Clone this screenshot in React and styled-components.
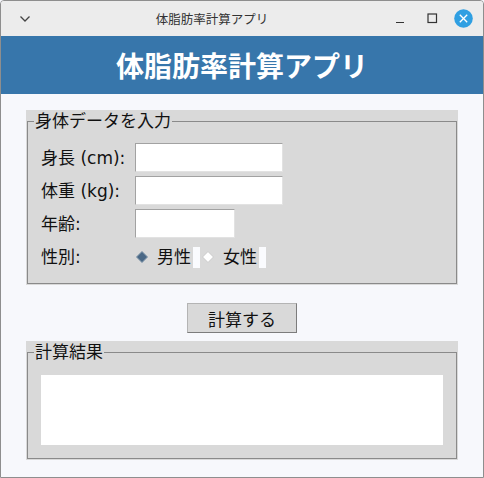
import React from "react";
import styled, { createGlobalStyle } from "styled-components";

const Global = createGlobalStyle`
  html, body { margin: 0; padding: 0; background: #f7f8fc; }
  * { box-sizing: border-box; }
`;

const FONT = `"Noto Sans CJK JP", "Noto Sans", sans-serif`;
const TK_FONT = `"DejaVu Sans", "Noto Sans CJK JP", sans-serif`;

const Window = styled.div`
  width: 484px;
  height: 478px;
  border: 1px solid #8e8e8e;
  border-radius: 4px 4px 0 0;
  background: #f7f8fc;
  display: flex;
  flex-direction: column;
  overflow: hidden;
  font-family: ${FONT};
`;

const TitleBar = styled.div`
  height: 35px;
  flex: none;
  background: #ececec;
  display: flex;
  align-items: center;
`;

const TitleLeft = styled.div`
  width: 43px;
  display: flex;
  justify-content: center;
  padding-left: 4px;
`;

const TitleText = styled.div`
  flex: 1;
  text-align: center;
  font-size: 12.5px;
  color: #333;
`;

const TitleRight = styled.div`
  width: 103px;
  display: flex;
  align-items: center;
  padding-left: 4px;
`;

const WinBtn = styled.div`
  width: ${(p) => p.$w}px;
  height: 20px;
  display: flex;
  align-items: center;
  justify-content: center;
`;

const Header = styled.div`
  height: 58px;
  flex: none;
  background: #3776ab;
  color: #fff;
  display: flex;
  align-items: center;
  justify-content: center;
  font-size: 28px;
  font-weight: 700;
`;

const Body = styled.div`
  padding: 16px 25px 0 25px;
  display: flex;
  flex-direction: column;
  font-family: ${TK_FONT};
`;

const Group = styled.div`
  background: #d9d9d9;
  padding: 0 1px 1px 1px;
`;

const Frame = styled.fieldset`
  margin: 0;
  padding: 0;
  border: 1px solid #8a8a8a;
  min-width: 0;
`;

const Legend = styled.legend`
  margin-left: 6px;
  padding: 0 1px;
  font-size: 17px;
  line-height: 22px;
  height: 22px;
  color: #111;
  background: #d9d9d9;
`;

const FormGrid = styled.div`
  display: grid;
  grid-template-columns: 94px 1fr;
  grid-template-rows: 29px 29px 29px 30px;
  row-gap: 4px;
  padding: 11px 13px 11px 13px;
  align-items: center;
  justify-items: start;
`;

const FieldLabel = styled.div`
  font-size: 17px;
  color: #111;
  line-height: 22px;
`;

const Entry = styled.input`
  width: ${(p) => p.$w}px;
  height: 29px;
  margin: 0;
  padding: 2px 4px;
  background: #fff;
  border-style: solid;
  border-width: 1px;
  border-color: #a2a2a2 #e2e2e2 #e2e2e2 #a2a2a2;
  font-family: ${TK_FONT};
  font-size: 16px;
  outline: none;
`;

const RadioGroup = styled.div`
  display: flex;
  align-items: center;
  padding-left: 1px;
  gap: 2px;
`;

const RadioOption = styled.label`
  display: flex;
  align-items: center;
  font-size: 17px;
  color: #111;
  line-height: 22px;
`;

const RadioText = styled.span`
  margin-left: 9px;
  margin-right: 2px;
`;

const Strip = styled.span`
  width: 7px;
  height: 21px;
  background: #fafbfe;
`;

const ButtonRow = styled.div`
  display: flex;
  justify-content: center;
  padding: 18px 0 8px 0;
`;

const Button = styled.button`
  width: 110px;
  height: 30px;
  margin: 0;
  padding: 0;
  background: #d9d9d9;
  border-style: solid;
  border-width: 1px;
  border-color: #b4b4b4 #7c7c7c #7c7c7c #b4b4b4;
  font-family: ${TK_FONT};
  font-size: 17px;
  color: #111;
`;

const ResultContent = styled.div`
  padding: 12px 13px 13px 13px;
`;

const ResultBox = styled.div`
  height: 70px;
  background: #fff;
`;

function Diamond({ selected }) {
  return (
    <svg width="12" height="12" viewBox="0 0 12 12">
      <polygon
        points="6,0.5 11.5,6 6,11.5 0.5,6"
        fill={selected ? "#4a6886" : "#ffffff"}
        stroke={selected ? "#7d93a8" : "#c9c9c9"}
        strokeWidth="1"
      />
    </svg>
  );
}

export default function App() {
  return (
    <>
      <Global />
      <Window>
        <TitleBar>
          <TitleLeft>
            <svg width="12" height="8" viewBox="0 0 12 8">
              <polyline points="1.5,1.5 6,6 10.5,1.5" fill="none" stroke="#444" strokeWidth="1.3" />
            </svg>
          </TitleLeft>
          <TitleText>体脂肪率計算アプリ</TitleText>
          <TitleRight>
            <WinBtn $w={32}>
              <svg width="10" height="10" viewBox="0 0 10 10">
                <line x1="1" y1="8.5" x2="9" y2="8.5" stroke="#333" strokeWidth="1.2" />
              </svg>
            </WinBtn>
            <WinBtn $w={32}>
              <svg width="11" height="11" viewBox="0 0 11 11">
                <rect x="1" y="1" width="8.5" height="8.5" fill="none" stroke="#333" strokeWidth="1.2" />
              </svg>
            </WinBtn>
            <WinBtn $w={30}>
              <svg width="19" height="19" viewBox="0 0 19 19">
                <circle cx="9.5" cy="9.5" r="9.3" fill="#2f9fe2" />
                <line x1="5.8" y1="5.8" x2="13.2" y2="13.2" stroke="#fff" strokeWidth="1.3" />
                <line x1="13.2" y1="5.8" x2="5.8" y2="13.2" stroke="#fff" strokeWidth="1.3" />
              </svg>
            </WinBtn>
          </TitleRight>
        </TitleBar>
        <Header>体脂肪率計算アプリ</Header>
        <Body>
          <Group>
            <Frame>
              <Legend>身体データを入力</Legend>
              <FormGrid>
                <FieldLabel>身長 (cm):</FieldLabel>
                <Entry $w={148} />
                <FieldLabel>体重 (kg):</FieldLabel>
                <Entry $w={148} />
                <FieldLabel>年齢:</FieldLabel>
                <Entry $w={100} />
                <FieldLabel>性別:</FieldLabel>
                <RadioGroup>
                  <RadioOption>
                    <Diamond selected />
                    <RadioText>男性</RadioText>
                    <Strip />
                  </RadioOption>
                  <RadioOption>
                    <Diamond />
                    <RadioText>女性</RadioText>
                    <Strip />
                  </RadioOption>
                </RadioGroup>
              </FormGrid>
            </Frame>
          </Group>
          <ButtonRow>
            <Button>計算する</Button>
          </ButtonRow>
          <Group>
            <Frame>
              <Legend>計算結果</Legend>
              <ResultContent>
                <ResultBox />
              </ResultContent>
            </Frame>
          </Group>
        </Body>
      </Window>
    </>
  );
}
